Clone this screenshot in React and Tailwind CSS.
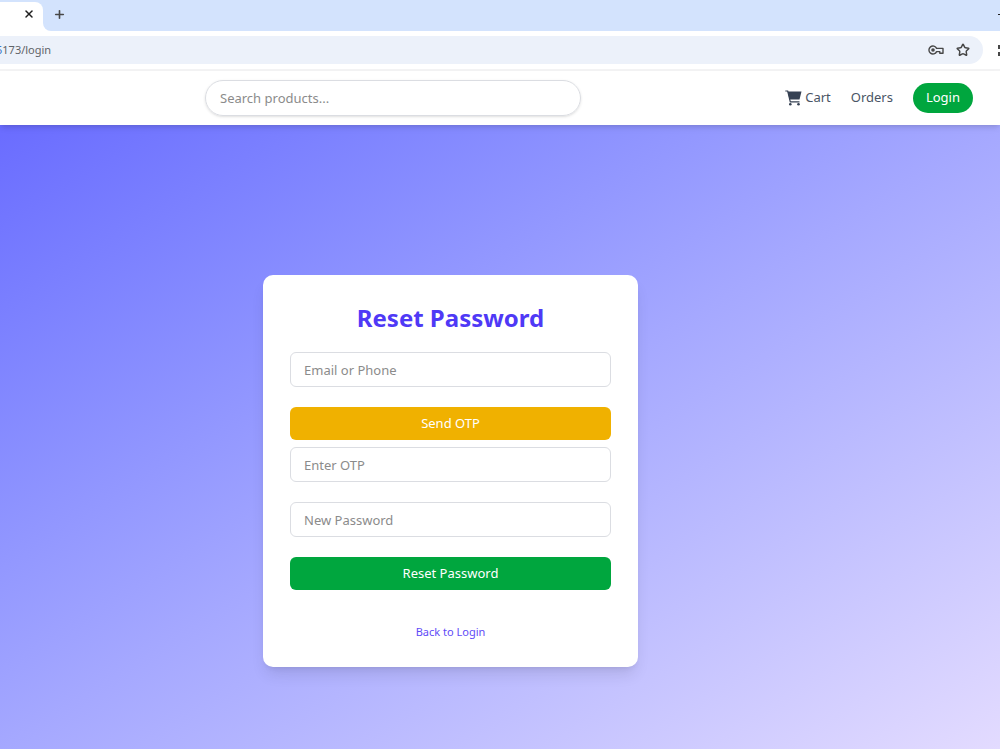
import { useState } from 'react';
import { Plus, X, Star } from 'lucide-react';

const fieldClass =
  'w-full h-[35px] px-[13px] bg-white border border-[#dbdde2] rounded-md text-[13px] text-gray-700 placeholder-[#8b8b8b] focus:outline-none focus:ring-2 focus:ring-indigo-400';

const buttonClass = 'w-full h-[33px] pt-px text-white text-[13px] rounded-md';

function KeyIcon() {
  return (
    <svg width="16" height="12" viewBox="0 0 16 12" fill="none" stroke="currentColor" strokeWidth="1.4">
      <path d="M8.6 4.4H15v4.8h-3.2V7.6H8.6A4 4 0 1 1 8.6 4.4Z" strokeLinejoin="round" />
      <circle cx="5" cy="6" r="1.8" fill="currentColor" stroke="none" />
    </svg>
  );
}

function CartIcon() {
  return (
    <svg width="17" height="16" viewBox="0 0 17 16" fill="none" stroke="currentColor" className="text-gray-700">
      <path d="M.3 1h2.4l2.6 10.9h9.2" strokeWidth="1.2" />
      <path d="M2.7 1.6h13.8l-2 7.9H4.6Z" fill="currentColor" stroke="none" />
      <circle cx="5.3" cy="14.2" r="1.3" fill="currentColor" stroke="none" />
      <circle cx="13.5" cy="14.2" r="1.3" fill="currentColor" stroke="none" />
    </svg>
  );
}

function BrowserBar() {
  return (
    <div className="bg-white border-b-2 border-[#f3f3f4] text-[#474747]">
      <div className="flex h-[31px] bg-white">
        <div className="flex w-[43px] bg-[#d3e3fd]">
          <div className="flex flex-1 items-center justify-end bg-white rounded-tr-lg pr-2 mt-[2px]">
            <button type="button" aria-label="Close tab" className="text-[#1f1f1f] pb-[5px]">
              <X size={12} strokeWidth={3} />
            </button>
          </div>
        </div>
        <div className="flex flex-1 items-center justify-between bg-[#d3e3fd] rounded-bl-lg pl-[10px]">
          <button type="button" aria-label="New tab" className="pb-[3px]">
            <Plus size={13} strokeWidth={3} />
          </button>
          <span className="w-[2px] h-px bg-[#1f1f1f] mb-[2px]" />
        </div>
      </div>
      <div className="flex items-center py-[5px]">
        <div className="flex flex-1 items-center h-7 bg-[#ecf1fa] rounded-r-full pr-[13px] overflow-hidden">
          <span className="flex-1 text-[11px] text-[#5f6368] -ml-[4px] pt-px">
            <span className="text-[#3b78c9]">5</span>173/login
          </span>
          <button type="button" aria-label="Manage passwords" className="mr-3">
            <KeyIcon />
          </button>
          <button type="button" aria-label="Bookmark this tab">
            <Star size={14} strokeWidth={2.5} />
          </button>
        </div>
        <div className="flex w-[17px] flex-col items-end gap-[3px]">
          <span className="w-[2px] h-1 bg-[#474747]" />
          <span className="w-[2px] h-1 bg-[#474747]" />
        </div>
      </div>
    </div>
  );
}

function Navbar() {
  const [query, setQuery] = useState('');

  return (
    <nav className="relative flex items-center justify-between h-[54px] bg-white pl-[205px] pr-[27px] shadow-md">
      <input
        type="text"
        aria-label="Search products"
        value={query}
        onChange={(e) => setQuery(e.target.value)}
        placeholder="Search products..."
        className="w-full max-w-[376px] h-[36px] px-[14px] border border-[#dbdde2] rounded-full text-[13px] shadow-sm placeholder-[#8b8b8b] focus:outline-none focus:ring-2 focus:ring-green-500"
      />
      <div className="flex items-center gap-5 text-[13px] text-gray-600">
        <a href="/cart" className="flex items-center gap-[3px]">
          <CartIcon />
          Cart
        </a>
        <a href="/orders">Orders</a>
        <a href="/login" className="bg-[#00a63e] text-white rounded-full px-[13px] py-[5px]">
          Login
        </a>
      </div>
    </nav>
  );
}

function ResetPassword() {
  const [contact, setContact] = useState('');
  const [otp, setOtp] = useState('');
  const [newPassword, setNewPassword] = useState('');

  return (
    <main className="flex flex-1 items-center justify-center bg-linear-to-br from-[#6a6cff] via-[#a5a8ff] to-[#e3dbff] pt-[68px] pr-[99px]">
      <div className="w-full max-w-[375px] bg-white rounded-[10px] shadow-lg p-[27px]">
        <h2 className="text-2xl font-bold text-center text-[#4f39f6] mb-[18px]">Reset Password</h2>
        <form onSubmit={(e) => e.preventDefault()}>
          <input type="text" aria-label="Email or Phone" placeholder="Email or Phone" value={contact} onChange={(e) => setContact(e.target.value)} className={`${fieldClass} mb-5`} />
          <button type="button" className={`${buttonClass} bg-[#f0b100] mb-[7px]`}>
            Send OTP
          </button>
          <input type="text" aria-label="Enter OTP" placeholder="Enter OTP" value={otp} onChange={(e) => setOtp(e.target.value)} className={`${fieldClass} mb-5`} />
          <input type="password" aria-label="New Password" placeholder="New Password" value={newPassword} onChange={(e) => setNewPassword(e.target.value)} className={`${fieldClass} mb-5`} />
          <button type="submit" className={`${buttonClass} bg-[#00a63e]`}>
            Reset Password
          </button>
        </form>
        <p className="text-center text-[11px] leading-4 text-[#5f4bf7] mt-[34px]">
          <a href="/login" className="hover:underline">Back to Login</a>
        </p>
      </div>
    </main>
  );
}

function App() {
  return (
    <div className="flex flex-col min-h-screen font-['Segoe_UI','Noto_Sans',sans-serif]">
      <BrowserBar />
      <Navbar />
      <ResetPassword />
    </div>
  );
}

export default App;
